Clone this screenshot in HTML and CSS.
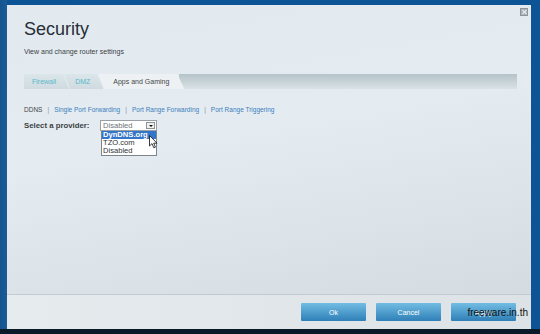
FILE: index.html
```html
<!DOCTYPE html>
<html lang="en">
<head>
<meta charset="UTF-8" />
<title>Security</title>
<link rel="stylesheet" href="styles.css">
</head>
<body>

<div class="desk">
  <div class="dialog">
    <span class="close"></span>

    <div class="head">
      <h1>Security</h1>
      <p>View and change router settings</p>
    </div>

    <div class="tabs">
      <div class="tab">Firewall</div>
      <div class="tab">DMZ</div>
      <div class="tab active">Apps and Gaming</div>
      <div class="tabfill"></div>
    </div>

    <div class="content">
      <div class="subnav">
        <span class="cur">DDNS</span>
        <span class="sep">|</span>
        <a>Single Port Forwarding</a>
        <span class="sep">|</span>
        <a>Port Range Forwarding</a>
        <span class="sep">|</span>
        <a>Port Range Triggering</a>
      </div>

      <div class="row">
        <label>Select a provider:</label>
        <div class="select">
          <div class="box">
            <span>Disabled</span>
            <span class="arrow"></span>
          </div>
          <ul class="list">
            <li class="hi">DynDNS.org</li>
            <li>TZO.com</li>
            <li>Disabled</li>
          </ul>
          <svg class="pointer" width="9" height="14" viewBox="0 0 9 14">
            <path d="M0.5 0.5 L0.5 11 L3 8.6 L4.8 12.8 L6.4 12.1 L4.7 8.2 L8 8.2 Z" fill="#fff" stroke="#222" stroke-width="0.9" stroke-linejoin="round"/>
          </svg>
        </div>
      </div>
    </div>

    <div class="foot">
      <button>Ok</button>
      <button>Cancel</button>
      <button>Apply</button>
      <span class="mark">freeware.in.th</span>
    </div>
  </div>
</div>
<div class="taskbar"></div>

</body>
</html>
```

FILE: styles.css
```css
body {
  margin: 0;
  height: 334px;
  overflow: hidden;
  background: #0c5596;
  font-family: "Liberation Sans", Arial, sans-serif;
  display: flex;
  flex-direction: column;
}

.desk {
  flex: 1;
  padding: 5px 9px 0 7px;
  display: flex;
  background: linear-gradient(90deg, #14558f 0, #1b5c96 7px, #0d5497 7px);
}

.dialog {
  position: relative;
  flex: 1;
  display: flex;
  flex-direction: column;
  background: linear-gradient(170deg, #e3eaef 0%, #e5ecf1 40%, #d1d9df 100%);
}

.close {
  position: absolute;
  top: 3px;
  right: 3px;
  width: 6px;
  height: 6px;
  border: 1px solid #8d969c;
  background: #a9b1b6;
}
.close::before,
.close::after {
  content: "";
  position: absolute;
  left: 2.5px;
  top: 0;
  width: 1px;
  height: 6px;
  background: #eef1f3;
  transform: rotate(45deg);
}
.close::after { transform: rotate(-45deg); }

.head {
  padding: 13px 0 0 17px;
  height: 56px;
}

.head h1 {
  margin: 0;
  font-size: 18px;
  line-height: 22px;
  font-weight: normal;
  color: #262d36;
}

.head p {
  margin: 8px 0 0;
  font-size: 7px;
  color: #3b4147;
}

/* tabs */
.tabs {
  display: flex;
  height: 15px;
  margin: 0 0 0 17px;
  font-size: 7px;
}

.tab {
  display: flex;
  align-items: center;
  padding: 0 13px 0 8px;
  margin-right: -5px;
  color: #5ab7c9;
  background: linear-gradient(#dbe6ea, #cfdbe0);
  clip-path: polygon(0 0, calc(100% - 6px) 0, 100% 100%, 0 100%);
}
.tab:nth-child(2) {
  padding-left: 11px;
  clip-path: polygon(0 0, calc(100% - 6px) 0, 100% 100%, 6px 100%, 0 0);
}
.tab.active {
  padding: 0 15px 0 15px;
  color: #43474b;
  background: #edf1f3;
  z-index: 1;
  clip-path: polygon(0 0, calc(100% - 7px) 0, 100% 100%, 6px 100%, 0 0);
}

.tabfill {
  flex: 1;
  margin-right: 14px;
  background: linear-gradient(#b5c3c9, #dae2e5);
}

/* content */
.content {
  padding: 17px 0 0 17px;
}

.subnav {
  font-size: 6.5px;
  color: #3f4449;
  display: flex;
  gap: 5px;
  height: 9px;
}
.subnav a { color: #3b80bd; }
.subnav .sep { color: #8a9399; }

.row {
  display: flex;
  align-items: flex-start;
  margin-top: 5px;
}

.row label {
  font-size: 7.8px;
  font-weight: bold;
  color: #3a3f44;
  width: 76px;
  margin-top: 1px;
}

.select {
  position: relative;
  width: 57px;
  font-size: 7.6px;
}

.box {
  display: flex;
  justify-content: space-between;
  align-items: center;
  height: 9px;
  border: 1px solid #98a0a6;
  background: #fff;
  color: #6d7378;
  padding-left: 2px;
}

.arrow {
  width: 9px;
  height: 7px;
  margin-right: 1px;
  border: 1px solid #8c9296;
  background: #eef0f1;
  box-sizing: border-box;
  position: relative;
}
.arrow::after {
  content: "";
  position: absolute;
  left: 2px;
  top: 2px;
  border-left: 2px solid transparent;
  border-right: 2px solid transparent;
  border-top: 2px solid #111;
}

.list {
  list-style: none;
  margin: 0 0 0 1px;
  padding: 0;
  width: 54px;
  border: 1px solid #7d858b;
  border-top: 0;
  background: #fff;
  color: #2f3438;
}
.list li {
  height: 8px;
  line-height: 8px;
  padding-left: 1px;
}
.list li.hi {
  background: #3375c9;
  color: #fff;
  font-weight: bold;
}

.pointer {
  position: absolute;
  left: 49px;
  top: 15px;
}

/* footer */
.foot {
  margin-top: auto;
  height: 35px;
  border-top: 1px solid #c4cbd0;
  background: linear-gradient(90deg, #e6ebee, #dde2e6);
  display: flex;
  justify-content: flex-end;
  align-items: flex-start;
  gap: 10px;
  padding: 8px 15px 0 0;
  box-sizing: border-box;
  position: relative;
}

.foot button {
  width: 65px;
  height: 18px;
  border: 0;
  border-radius: 1px;
  padding: 0;
  font-family: inherit;
  font-size: 7px;
  color: #fff;
  background: linear-gradient(#72bde3, #2f7fb8);
}

.mark {
  position: absolute;
  right: 3px;
  top: 12px;
  font-size: 10px;
  color: #111;
}

.taskbar {
  height: 5px;
  background: #0b1a29;
}
```
